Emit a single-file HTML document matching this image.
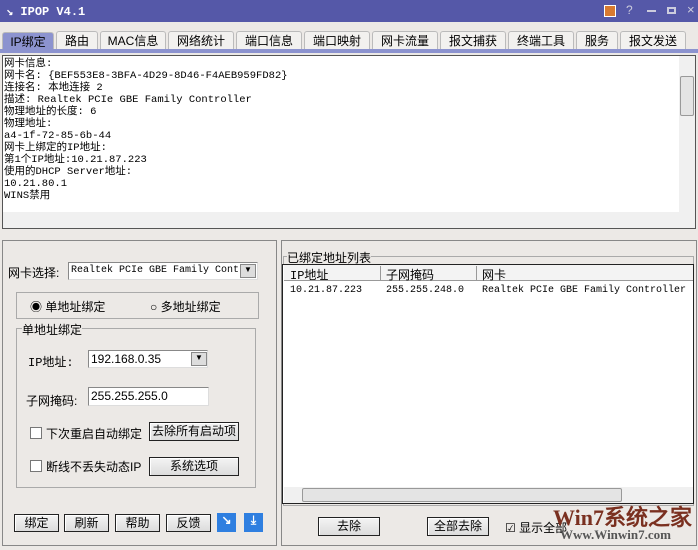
<html><head><style>
*{margin:0;padding:0;box-sizing:border-box}
body{width:698px;height:550px;background:#ece9e6;font:12px "Liberation Sans","WenQuanYi Zen Hei",sans-serif;position:relative;overflow:hidden}
.a{position:absolute;white-space:nowrap}
.mono{font-family:"Liberation Mono","WenQuanYi Zen Hei",monospace;font-size:10px}
.tab{position:absolute;top:31px;height:19px;border:1px solid #bbb;border-bottom:none;background:#f2f1ef;text-align:center;font-size:12px;line-height:18px;border-radius:3px 3px 0 0;white-space:nowrap}
.btn{position:absolute;border:1px solid #222;background:linear-gradient(#f4f4f4,#dcdcdc);text-align:center;font-size:12px;line-height:17px;box-shadow:inset 1px 1px #fff;white-space:nowrap}
.inp{position:absolute;background:#fff;border:1px solid #888;border-right-color:#ddd;border-bottom-color:#ddd;white-space:nowrap;overflow:hidden}
.grp{position:absolute;border:1px solid #aaa}
.cb{position:absolute;width:12px;height:12px;border:1px solid #777;background:#fff}
</style></head><body>
<div class="a" style="left:0;top:0;width:698px;height:22px;background:#5558a8"></div>
<div class="a" style="left:6px;top:4px;color:#fff;font:bold 12px 'Liberation Mono',monospace">↘ IPOP V4.1</div>
<div class="a" style="left:604px;top:5px;width:12px;height:12px;background:#d87a30;border:1px solid #fff"></div>
<div class="a" style="left:626px;top:3px;color:#ccd;font-size:12px">?</div>
<div class="a" style="left:647px;top:10px;width:9px;height:2px;background:#ccd"></div>
<div class="a" style="left:667px;top:7px;width:9px;height:7px;border:2px solid #ccd"></div>
<div class="a" style="left:687px;top:2px;color:#ccd;font-size:13px">×</div>
<div class="tab" style="left:2px;width:52px;background:#8c93cf;top:32px">IP绑定</div>
<div class="tab" style="left:56px;width:42px">路由</div>
<div class="tab" style="left:100px;width:66px">MAC信息</div>
<div class="tab" style="left:168px;width:66px">网络统计</div>
<div class="tab" style="left:236px;width:66px">端口信息</div>
<div class="tab" style="left:304px;width:66px">端口映射</div>
<div class="tab" style="left:372px;width:66px">网卡流量</div>
<div class="tab" style="left:440px;width:66px">报文捕获</div>
<div class="tab" style="left:508px;width:66px">终端工具</div>
<div class="tab" style="left:576px;width:42px">服务</div>
<div class="tab" style="left:620px;width:66px">报文发送</div>
<div class="a" style="left:0;top:49px;width:698px;height:4px;background:#8c93cf"></div>
<div class="a" style="left:2px;top:55px;width:694px;height:174px;background:#fff;border:1px solid #555"></div>
<div class="a mono" style="left:4px;top:58px;line-height:12px;white-space:pre;font-size:10.5px">网卡信息:
网卡名: {BEF553E8-3BFA-4D29-8D46-F4AEB959FD82}
连接名: 本地连接 2
描述: Realtek PCIe GBE Family Controller
物理地址的长度: 6
物理地址:
a4-1f-72-85-6b-44
网卡上绑定的IP地址:
第1个IP地址:10.21.87.223
使用的DHCP Server地址:
10.21.80.1
WINS禁用</div>
<div class="a" style="left:679px;top:56px;width:16px;height:156px;background:#f0f0f0"></div>
<div class="a" style="left:680px;top:76px;width:14px;height:40px;background:#e4e4e4;border:1px solid #999;border-radius:2px"></div>
<div class="a" style="left:3px;top:212px;width:692px;height:16px;background:#f0f0f0"></div>
<!-- left panel -->
<div class="a" style="left:2px;top:240px;width:275px;height:306px;border:1px solid #888"></div>
<div class="a" style="left:8px;top:264px;font-size:12px">网卡选择:</div>
<div class="inp mono" style="left:68px;top:262px;width:190px;height:18px;padding:2px">Realtek PCIe GBE Family Cont:</div>
<div class="a" style="left:240px;top:264px;width:16px;height:14px;background:#ddd;border:1px solid #888;font-size:8px;text-align:center">▼</div>
<div class="grp" style="left:16px;top:292px;width:243px;height:27px"></div>
<div class="a" style="left:30px;top:298px;font-size:12px">◉ 单地址绑定</div>
<div class="a" style="left:150px;top:298px;font-size:12px">○ 多地址绑定</div>
<div class="grp" style="left:16px;top:328px;width:240px;height:160px"></div>
<div class="a" style="left:22px;top:321px;background:#ece9e6;font-size:12px">单地址绑定</div>
<div class="a mono" style="left:28px;top:353px;font-size:12px">IP地址:</div>
<div class="inp" style="left:88px;top:350px;width:120px;height:18px;padding:1px 2px;font-size:12px">192.168.0.35</div>
<div class="a" style="left:191px;top:352px;width:16px;height:14px;background:#ddd;border:1px solid #888;font-size:8px;text-align:center">▼</div>
<div class="a" style="left:26px;top:392px;font-size:12px">子网掩码:</div>
<div class="inp" style="left:88px;top:387px;width:121px;height:19px;padding:1px 2px;font-size:12px">255.255.255.0</div>
<div class="cb" style="left:30px;top:427px"></div>
<div class="a" style="left:46px;top:425px;font-size:12px">下次重启自动绑定</div>
<div class="btn" style="left:149px;top:422px;width:90px;height:19px">去除所有启动项</div>
<div class="cb" style="left:30px;top:460px"></div>
<div class="a" style="left:46px;top:458px;font-size:12px">断线不丢失动态IP</div>
<div class="btn" style="left:149px;top:457px;width:90px;height:19px">系统选项</div>
<div class="btn" style="left:14px;top:514px;width:45px;height:18px">绑定</div>
<div class="btn" style="left:64px;top:514px;width:45px;height:18px">刷新</div>
<div class="btn" style="left:115px;top:514px;width:45px;height:18px">帮助</div>
<div class="btn" style="left:166px;top:514px;width:45px;height:18px">反馈</div>
<div class="a" style="left:217px;top:513px;width:19px;height:19px;background:#2f7fe0;color:#fff;text-align:center;font-weight:bold">↘</div>
<div class="a" style="left:244px;top:513px;width:19px;height:19px;background:#2f7fe0;color:#fff;text-align:center;font-weight:bold">⤓</div>
<!-- right panel -->
<div class="a" style="left:281px;top:240px;width:416px;height:306px;border:1px solid #888"></div>
<div class="grp" style="left:283px;top:256px;width:411px;height:250px"></div>
<div class="a" style="left:287px;top:249px;background:#ece9e6;font-size:12px">已绑定地址列表</div>
<div class="a" style="left:282px;top:264px;width:412px;height:240px;background:#fff;border:1px solid #222"></div>
<div class="a" style="left:284px;top:265px;width:409px;height:16px;background:#f3f3f3;border-bottom:1px solid #999"></div>
<div class="a mono" style="left:290px;top:266px;font-size:12px">IP地址</div>
<div class="a" style="left:380px;top:266px;width:1px;height:14px;background:#999"></div>
<div class="a" style="left:386px;top:266px;font-size:12px">子网掩码</div>
<div class="a" style="left:476px;top:266px;width:1px;height:14px;background:#999"></div>
<div class="a" style="left:482px;top:266px;font-size:12px">网卡</div>
<div class="a mono" style="left:290px;top:285px">10.21.87.223</div>
<div class="a mono" style="left:386px;top:285px">255.255.248.0</div>
<div class="a mono" style="left:482px;top:285px">Realtek PCIe GBE Family Controller</div>
<div class="a" style="left:284px;top:487px;width:409px;height:16px;background:#f0f0f0"></div>
<div class="a" style="left:302px;top:488px;width:320px;height:14px;background:#e4e4e4;border:1px solid #999;border-radius:2px"></div>
<div class="btn" style="left:318px;top:517px;width:62px;height:19px">去除</div>
<div class="btn" style="left:427px;top:517px;width:62px;height:19px">全部去除</div>
<div class="a" style="left:505px;top:519px;font-size:12px">☑ 显示全部</div>
<div class="a" style="left:553px;top:500px;color:#7a3020;font:bold 22px 'Liberation Serif','WenQuanYi Zen Hei',serif">Win7系统之家</div>
<div class="a" style="left:560px;top:527px;color:#555;font:bold 13px 'Liberation Serif',serif">Www.Winwin7.com</div>
</body></html>
